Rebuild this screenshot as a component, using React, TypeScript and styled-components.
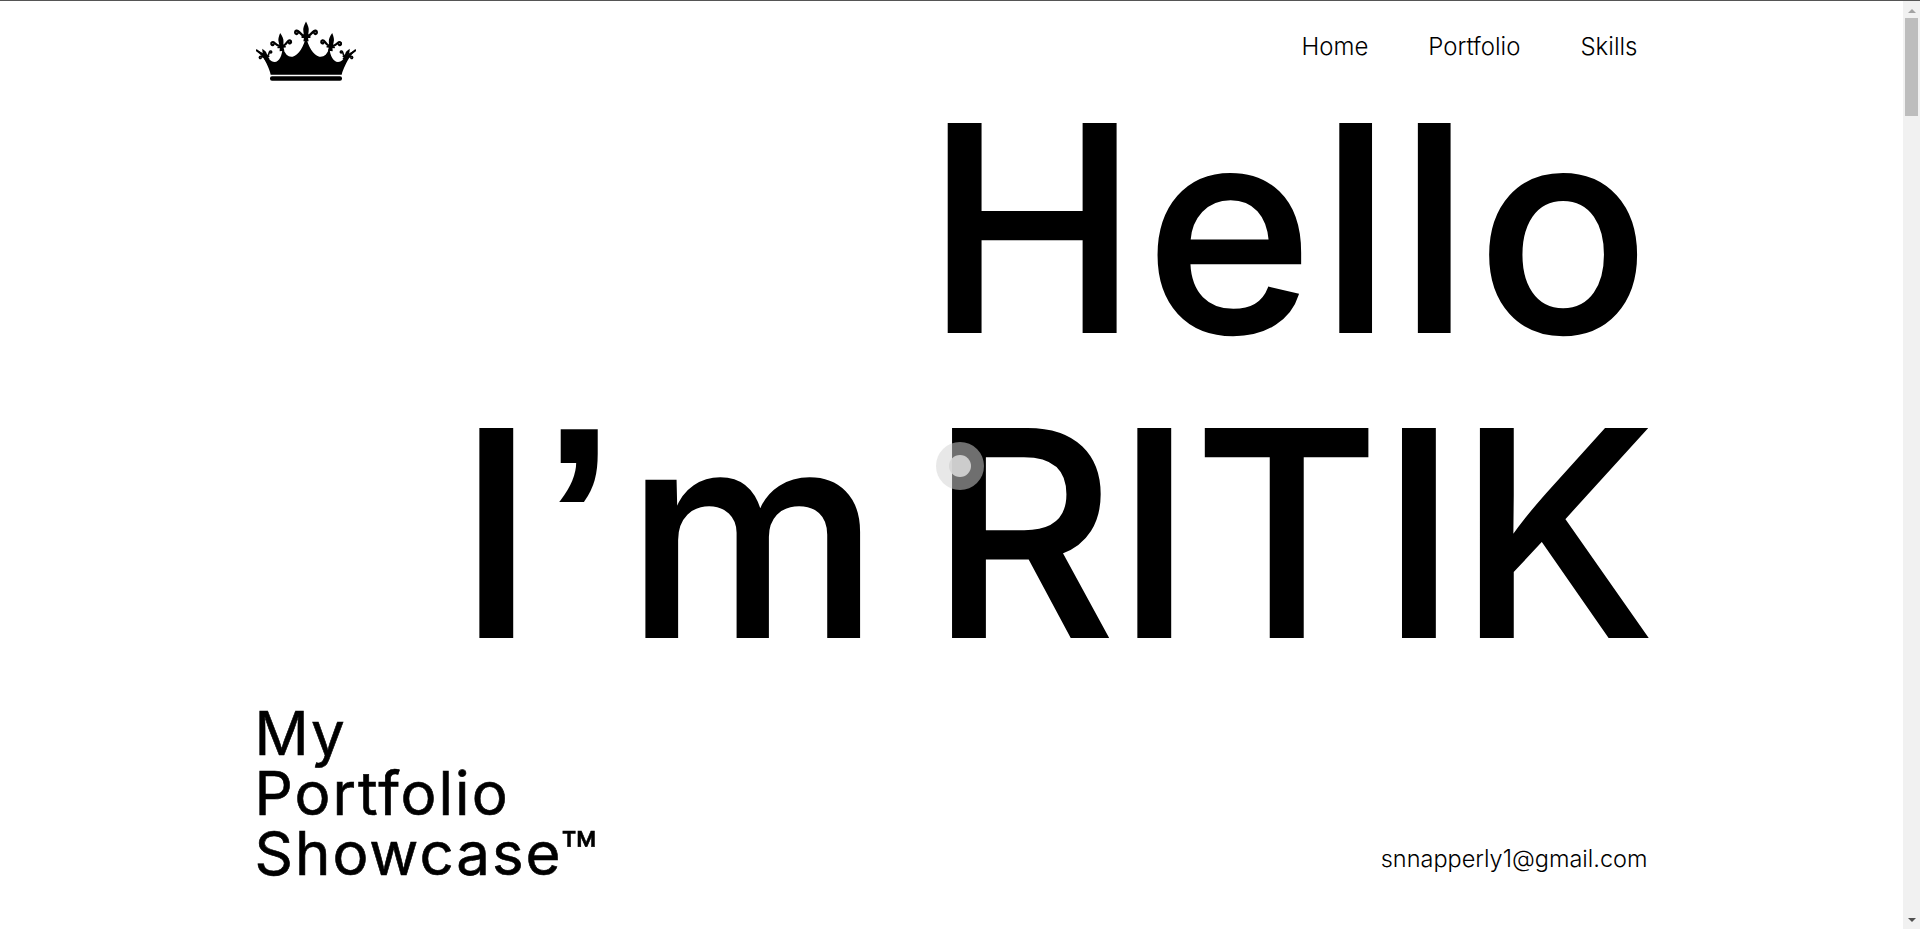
import React from 'react';
import styled, { createGlobalStyle } from 'styled-components';

const GlobalStyle = createGlobalStyle`
  html, body {
    margin: 0;
    height: 100%;
    overflow: hidden;
    background: #fff;
  }
  body {
    font-family: Inter, "Noto Sans", sans-serif;
    color: #000;
  }
`;

const Fleur = ({ x, y, rotate, scale }: { x: number; y: number; rotate: number; scale: number }) => (
  <g transform={`translate(${x} ${y}) rotate(${rotate}) scale(${scale})`}>
    <path d="M0 -38 C6 -26 10 -18 8 -8 C7 0 5 10 8 22 L-8 22 C-5 10 -7 0 -8 -8 C-10 -18 -6 -26 0 -38 Z" />
    <path
      d="M4 6 C12 4 17 -1 22 -7 C27 -13 34 -10 33 -4 C32 0 28 1 26 -2 M-4 6 C-12 4 -17 -1 -22 -7 C-27 -13 -34 -10 -33 -4 C-32 0 -28 1 -26 -2"
      fill="none"
      stroke="#000"
      strokeWidth="7.5"
      strokeLinecap="round"
    />
    <rect x="-14" y="6" width="28" height="6" rx="2" />
  </g>
);

const Crown = () => (
  <CrownSvg viewBox="48 60 300 186" aria-label="Crown logo">
    <path d="M92 224 C88 206 80 190 66 166 L50 150 L70 160 C82 172 92 186 104 186 C118 186 126 168 128 142 C136 166 146 172 158 170 C176 166 192 140 198 108 C204 140 220 166 238 170 C250 172 262 166 268 142 C270 168 280 186 294 186 C306 186 316 172 328 160 L347 150 L332 166 C318 190 310 206 305 224 Z" />
    <path
      d="M50 151 C64 160 80 176 92 204 M346 151 C332 160 316 176 304 204"
      fill="none"
      stroke="#000"
      strokeWidth="6"
      strokeLinecap="round"
    />
    <rect x="90" y="229" width="216" height="13" rx="6" />
    <Fleur x={198} y={102} rotate={0} scale={0.98} />
    <Fleur x={124} y={133} rotate={-6} scale={0.9} />
    <Fleur x={273} y={133} rotate={6} scale={0.9} />
    <Fleur x={78} y={167} rotate={-28} scale={0.62} />
    <Fleur x={318} y={167} rotate={28} scale={0.62} />
  </CrownSvg>
);

export default function App() {
  return (
    <>
      <GlobalStyle />
      <Shell>
        <Page>
          <Container>
            <Header>
              <Crown />
              <Nav>
                <NavLink>Home</NavLink>
                <NavLink>Portfolio</NavLink>
                <NavLink>Skills</NavLink>
              </Nav>
            </Header>
            <Hero>
              <HeroLine $spacing={6.5} $nudge={8.5}>Hello</HeroLine>
              <HeroLine $spacing={0} $nudge={7}>
                I<Apostrophe>’</Apostrophe>m RITIK
              </HeroLine>
            </Hero>
            <Footer>
              <Tagline>
                My
                <br />
                Portfolio
                <br />
                Showcase™
              </Tagline>
              <Email>snnapperly1@gmail.com</Email>
            </Footer>
          </Container>
          <CursorRing>
            <CursorDot />
          </CursorRing>
        </Page>
        <Scrollbar>
          <ArrowUp />
          <Thumb />
          <Track />
          <ArrowDown />
        </Scrollbar>
      </Shell>
    </>
  );
}

const Shell = styled.div`
  display: flex;
  height: 929px;
  box-sizing: border-box;
  border-top: 1px solid #555;
`;
const Page = styled.main`
  position: relative;
  flex: 1;
  min-width: 0;
  overflow: hidden;
`;
const Container = styled.div`
  width: 1392px;
  margin: 0 auto;
`;
const Header = styled.header`
  display: flex;
  justify-content: space-between;
  align-items: flex-start;
  padding-top: 19px;
  height: 56px;
`;
const CrownSvg = styled.svg`
  width: 100px;
  height: 62px;
  display: block;
`;
const Nav = styled.nav`
  display: flex;
  gap: 60px;
  padding: 11px 10px 0 0;
`;
const NavLink = styled.a`
  font-size: 24px;
  font-weight: 300;
  line-height: 32px;
  color: #000;
`;
const Hero = styled.section`
  display: flex;
  flex-direction: column;
  align-items: flex-end;
`;
const HeroLine = styled.h1<{ $spacing: number; $nudge: number }>`
  margin: 0 ${p => -p.$nudge}px 0 0;
  font-size: 286px;
  font-weight: 500;
  line-height: 305px;
  letter-spacing: ${p => p.$spacing}px;
  word-spacing: -26px;
  white-space: nowrap;
  -webkit-text-stroke: 2px #000;
`;
const Apostrophe = styled.span`
  margin: 0 12px 0 9px;
  font-family: "Liberation Sans", sans-serif;
  font-size: 250px;
  font-weight: 700;
  line-height: 0;
  vertical-align: 34px;
`;
const Footer = styled.footer`
  display: flex;
  justify-content: space-between;
  align-items: flex-end;
  margin-top: 17px;
`;
const Tagline = styled.div`
  margin-left: -1px;
  font-size: 60px;
  font-weight: 400;
  line-height: 60px;
  letter-spacing: 2px;
  -webkit-text-stroke: 0.6px #000;
`;
const Email = styled.div`
  font-size: 23.5px;
  font-weight: 300;
  line-height: 32px;
  margin-bottom: 8px;
`;
const CursorRing = styled.div`
  position: absolute;
  left: 936px;
  top: 441px;
  width: 48px;
  height: 48px;
  border-radius: 50%;
  background: rgba(211, 211, 211, 0.525);
  display: flex;
  align-items: center;
  justify-content: center;
`;
const CursorDot = styled.div`
  width: 22px;
  height: 22px;
  border-radius: 50%;
  background: rgba(214, 214, 214, 0.9);
`;
const Scrollbar = styled.div`
  width: 17px;
  flex-shrink: 0;
  background: #f1f1f1;
  display: flex;
  flex-direction: column;
  align-items: center;
`;
const ArrowUp = styled.div`
  width: 0;
  height: 0;
  margin: 8px 0 5px;
  border-left: 4px solid transparent;
  border-right: 4px solid transparent;
  border-bottom: 4px solid #a3a3a3;
`;
const Thumb = styled.div`
  width: 13px;
  height: 98px;
  background: #bdbdbd;
`;
const Track = styled.div`
  flex: 1;
`;
const ArrowDown = styled.div`
  width: 0;
  height: 0;
  margin-bottom: 7px;
  border-left: 4px solid transparent;
  border-right: 4px solid transparent;
  border-top: 4px solid #505050;
`;
